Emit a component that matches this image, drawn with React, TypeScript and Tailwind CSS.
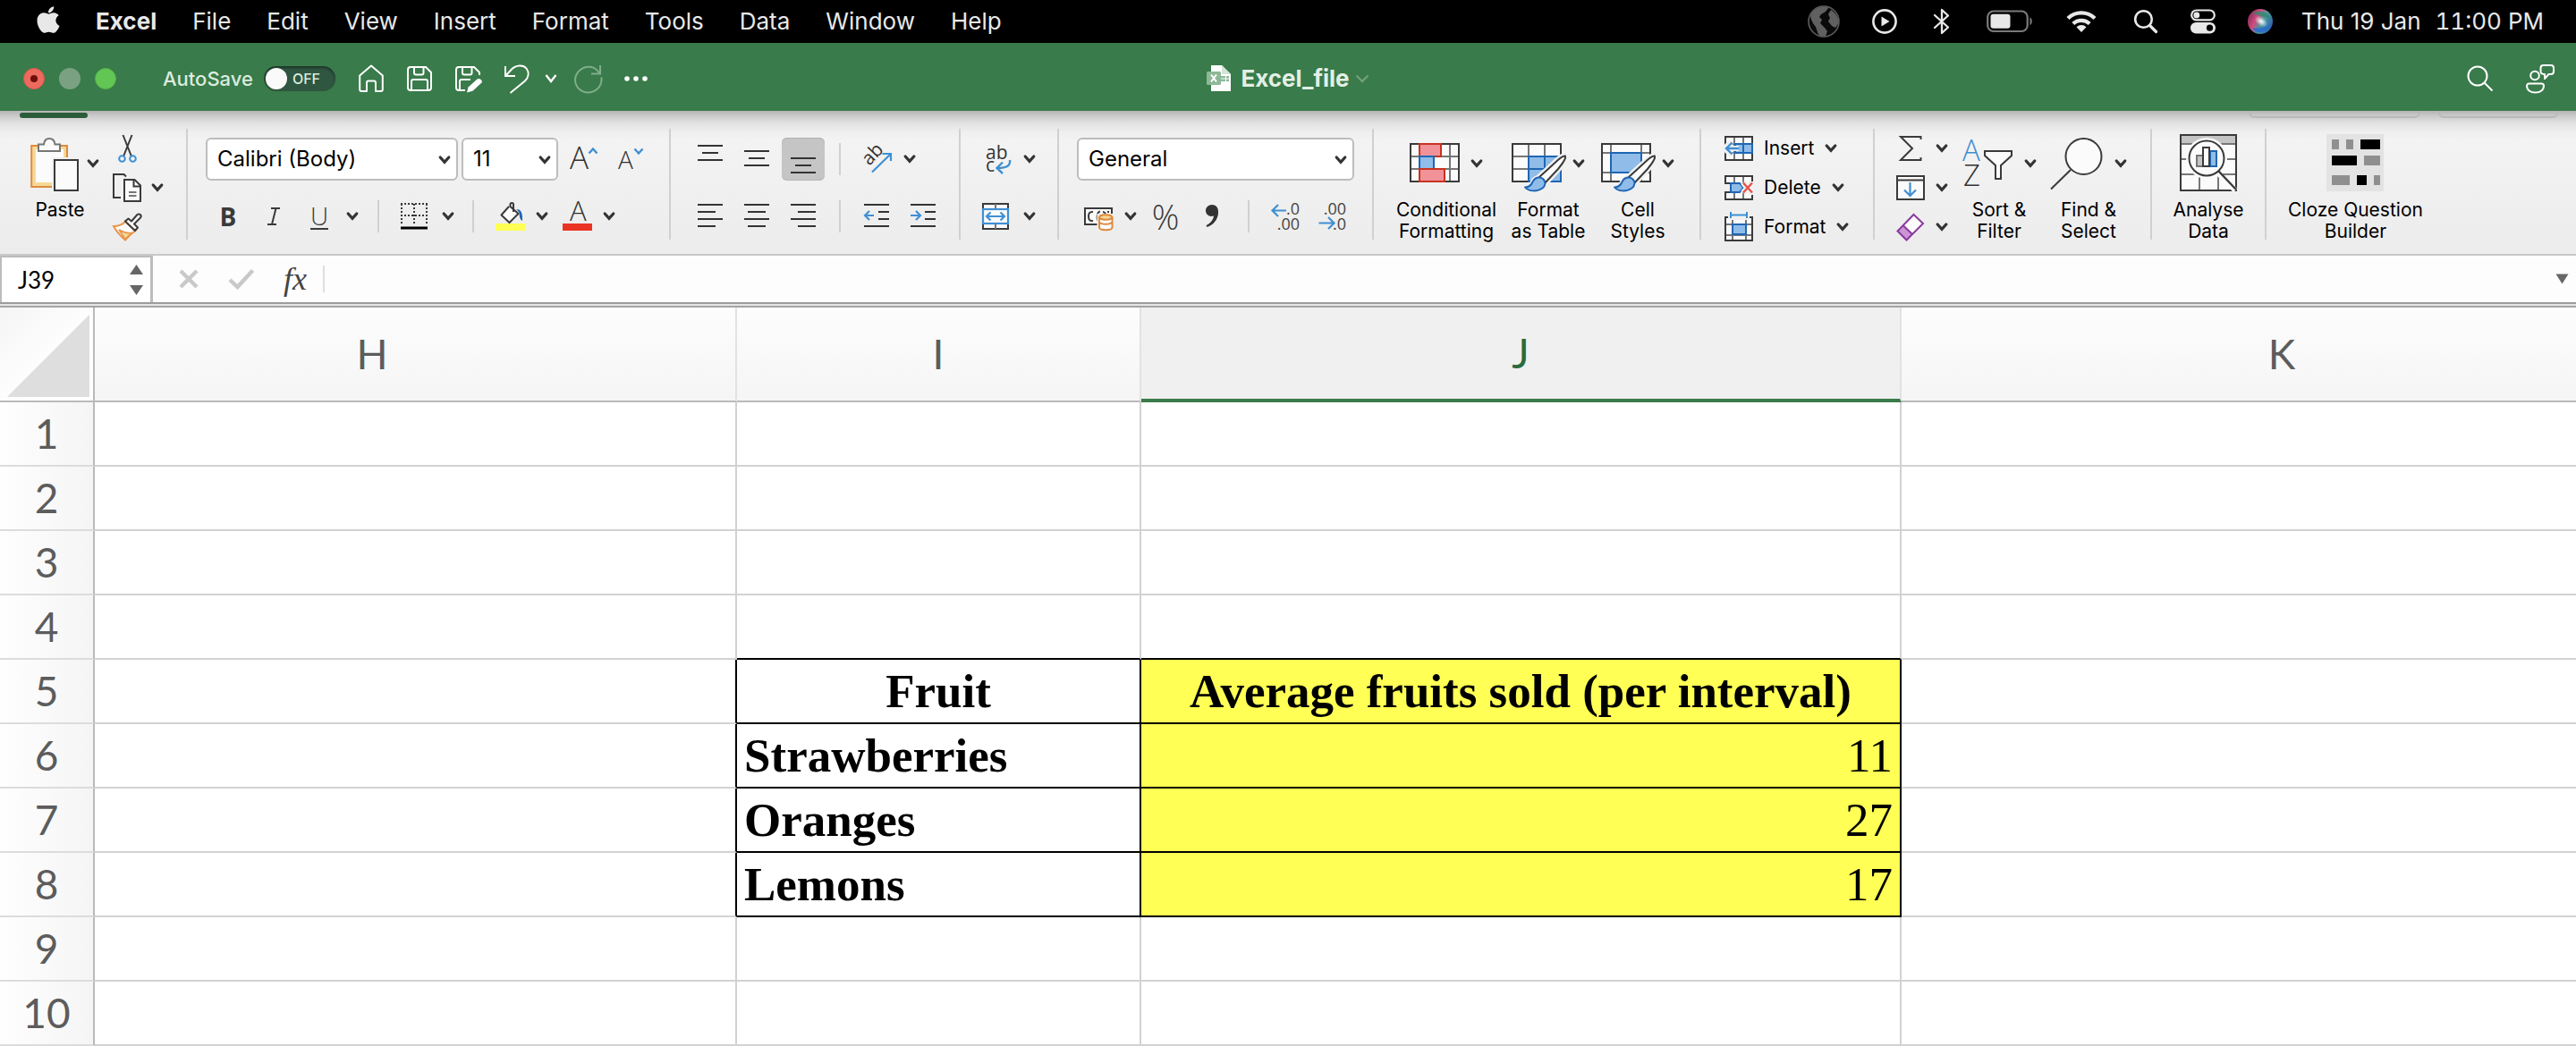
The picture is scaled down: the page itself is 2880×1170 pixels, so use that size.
import React from "react";
import { FaApple } from "react-icons/fa";

const INK = "#3a3a3a";
const BLUE = "#3f8fd2";
const DEEP = "#1f66b5";
const SKY = "#8fbce8";
const PAPER = "#fbfbfb";
const GREY = "#767676";
const RIBBON = "#f1f1f1";

type ArtProps = { w: number; h: number; className?: string; children: React.ReactNode };

function Art({ w, h, className = "", children }: ArtProps) {
  return (
    <svg width={w} height={h} viewBox={`0 0 ${w} ${h}`} fill="none" aria-hidden="true" className={`shrink-0 overflow-visible ${className}`}>
      {children}
    </svg>
  );
}

function Chevron({ className = "" }: { className?: string }) {
  return (
    <Art w={14} h={10} className={className}>
      <path d="M2.2 2 7 7.4 11.8 2" stroke="#333" strokeWidth="3.2" strokeLinecap="round" />
    </Art>
  );
}

type ToolProps = { label: string; className?: string; children: React.ReactNode };

function Tool({ label, className = "", children }: ToolProps) {
  return (
    <button type="button" aria-label={label} title={label} className={`flex shrink-0 items-center ${className}`}>
      {children}
    </button>
  );
}

function Divider({ className = "" }: { className?: string }) {
  return <span className={`h-9 w-[2px] shrink-0 bg-[#d0d0d0] ${className}`} />;
}

function Group({ className = "", children }: { className?: string; children: React.ReactNode }) {
  return <section className={`flex h-[124px] shrink-0 border-r-2 border-[#d0d0d0] ${className}`}>{children}</section>;
}

/* ---------- menu bar ---------- */

const MENUS = ["File", "Edit", "View", "Insert", "Format", "Tools", "Data", "Window", "Help"];

function MenuBar() {
  return (
    <header className="flex h-12 items-center bg-black text-[26px] leading-[48px] whitespace-nowrap text-[#e8e8e8]">
      <nav aria-label="Application menu" className="flex items-center gap-10 pl-9">
        <button type="button" aria-label="Apple menu" className="-mr-1 flex w-[35px] justify-center pb-1">
          <FaApple size={34} />
        </button>
        <button type="button" className="font-bold">Excel</button>
        {MENUS.map((m) => (
          <button type="button" key={m}>{m}</button>
        ))}
      </nav>
      <div className="ml-auto flex items-center pr-9">
        <Art w={36} h={36} className="mr-9">
          <circle cx="18" cy="18" r="17" fill="#0a0a0a" stroke="#5c5c5c" strokeWidth="1.6" />
          <path d="M3 12C5 6 11 1.500 18 1.500C20 1.500 22 2 23.500 2.600L20 7L15 10L13 13L16 16L14 20L19 25L22 29L20 34.800C15 35.500 12 34 11 30L9 24C6 21 4 17 3 12Z" fill="#606060" />
          <path d="M26 5C31 8 35 13 34.500 20L31 25L27 23L23 18L25 14L23 10Z" fill="#606060" />
        </Art>
        <Art w={28} h={28} className="mr-10">
          <circle cx="14" cy="14" r="12.600" stroke="#e8e8e8" strokeWidth="2.600" />
          <path d="M10.500 8.500 19.500 14 10.500 19.500Z" fill="#e8e8e8" />
        </Art>
        <Art w={20} h={30} className="mr-10">
          <path d="M2 8 17 21.500 10 28V2L17 8.500 2 22" stroke="#e8e8e8" strokeWidth="2.300" strokeLinejoin="round" strokeLinecap="round" />
        </Art>
        <Art w={52} h={26} className="mr-9">
          <rect x="1.200" y="1.500" width="44.500" height="22.500" rx="6.500" stroke="#7a7a7a" strokeWidth="2.200" />
          <rect x="4.500" y="4.700" width="22" height="16" rx="3" fill="#e8e8e8" />
          <path d="M48.500 8.500C51.500 9.500 51.500 16 48.500 17Z" fill="#7a7a7a" />
        </Art>
        <Art w={36} h={26} className="mr-10">
          <path d="M3 9.500A21.500 21.500 0 0 1 33 9.500" stroke="#e8e8e8" strokeWidth="4.400" />
          <path d="M8.800 15.500A13.300 13.300 0 0 1 27.200 15.500" stroke="#e8e8e8" strokeWidth="4.200" />
          <path d="M12.500 19.300A8 8 0 0 1 23.500 19.300L18 25Z" fill="#e8e8e8" />
        </Art>
        <Art w={28} h={28} className="mr-9">
          <circle cx="11.500" cy="11.500" r="9.300" stroke="#e8e8e8" strokeWidth="2.600" />
          <path d="M18.500 18.500 25.500 25.500" stroke="#e8e8e8" strokeWidth="3.200" strokeLinecap="round" />
        </Art>
        <Art w={28} h={28} className="mr-9">
          <rect x="1.200" y="1.500" width="25.600" height="10.800" rx="5.400" stroke="#e8e8e8" strokeWidth="2.200" />
          <circle cx="6.800" cy="6.900" r="3.400" fill="#e8e8e8" />
          <rect x="0" y="15" width="28" height="12.500" rx="6.200" fill="#e8e8e8" />
          <circle cx="21.500" cy="21.200" r="3.600" fill="#000" />
        </Art>
        <Art w={28} h={28} className="mr-8">
          <defs>
            <linearGradient id="orb" x1="0" y1="0.200" x2="1" y2="0.700">
              <stop offset="0" stopColor="#7c2d5b" />
              <stop offset="0.350" stopColor="#d14b7c" />
              <stop offset="0.600" stopColor="#4a9a9f" />
              <stop offset="1" stopColor="#2b5fb4" />
            </linearGradient>
            <radialGradient id="orbGlow">
              <stop offset="0" stopColor="#fff" />
              <stop offset="1" stopColor="#fff" stopOpacity="0" />
            </radialGradient>
          </defs>
          <circle cx="14" cy="14" r="14" fill="url(#orb)" />
          <path d="M6 5C13 0 24 4 26 12C20 8 12 8 6 5Z" fill="#2f8a6a" opacity="0.800" />
          <path d="M5 22C10 21 18 22 25 18C21 27 10 29 5 22Z" fill="#2a6bd0" opacity="0.850" />
          <ellipse cx="15" cy="14" rx="8" ry="5" fill="url(#orbGlow)" transform="rotate(35 15 14)" />
        </Art>
        <span className="mr-4">Thu 19 Jan</span>
        <span className="tabular-nums">11:00 PM</span>
      </div>
    </header>
  );
}

/* ---------- title bar ---------- */

function TitleBar() {
  return (
    <div className="grid h-[76px] grid-cols-[1fr_auto_1fr] items-center bg-[#397b4a] pt-1 text-white">
      <div className="flex items-center pl-[26px]">
        <div className="flex gap-4">
          <button type="button" aria-label="Close window" className="flex size-6 items-center justify-center rounded-full border border-[#d9564b] bg-[#ed6a5f]">
            <span className="size-2 rounded-full bg-[#6e0f0a]" />
          </button>
          <button type="button" aria-label="Minimise window" className="size-6 rounded-full bg-[#7ba183]" />
          <button type="button" aria-label="Zoom window" className="size-6 rounded-full border border-[#54b045] bg-[#62c655]" />
        </div>
        <label className="ml-[52px] flex items-center gap-3 text-[22px] leading-7 font-medium text-[#dcebdf]">
          AutoSave
          <span className="relative flex h-7 w-20 items-center rounded-full bg-[#2f5640] shadow-[inset_0_2px_3px_rgba(0,0,0,0.4)]">
            <input type="checkbox" role="switch" className="absolute inset-0 size-full cursor-pointer appearance-none" />
            <span className="ml-[2px] size-6 rounded-full bg-[#fafafa]" />
            <span className="ml-[6px] text-[16px] leading-5 font-medium">OFF</span>
          </span>
        </label>
        <Tool label="Home" className="ml-[26px]">
          <Art w={28} h={32}>
            <path d="M1.200 12.500 14 1.600 26.800 12.500V28a2 2 0 0 1-2 2H19V20.500a2 2 0 0 0-2-2H11a2 2 0 0 0-2 2V30H3.200a2 2 0 0 1-2-2Z" stroke="#fff" strokeWidth="2" strokeLinejoin="round" />
          </Art>
        </Tool>
        <Tool label="Save" className="ml-[26px]">
          <Art w={28} h={30}>
            <path d="M4 2H21L27 8V25a3 3 0 0 1-3 3H4a3 3 0 0 1-3-3V5a3 3 0 0 1 3-3Z" stroke="#fff" strokeWidth="2" />
            <path d="M8 2V8.500a2 2 0 0 0 2 2H16.500a2 2 0 0 0 2-2V2M5 28V18a2 2 0 0 1 2-2H21a2 2 0 0 1 2 2V28" stroke="#fff" strokeWidth="2" />
          </Art>
        </Tool>
        <Tool label="Save as" className="ml-[26px]">
          <Art w={32} h={32}>
            <path d="M11 29H4a3 3 0 0 1-3-3V6a3 3 0 0 1 3-3H21L27 9V12" stroke="#fff" strokeWidth="2" />
            <path d="M8 3V9.500a2 2 0 0 0 2 2H16.500a2 2 0 0 0 2-2V3M5 29V19a2 2 0 0 1 2-2H17" stroke="#fff" strokeWidth="2" />
            <path d="M24.500 16.500C27 14.500 31 18 29.500 20.500L19.500 29.800 13 31.500 14.500 25.500Z" fill="#fff" />
          </Art>
        </Tool>
        <Tool label="Undo" className="ml-[22px] gap-4">
          <Art w={30} h={34}>
            <path d="M2 3V14H13M2.500 13.500 9 6.500C14 1.500 22 1 25.500 5.500C29 10 28 15.500 24 19.500L7.500 33" stroke="#fff" strokeWidth="2" />
          </Art>
          <Art w={14} h={12}>
            <path d="M1.500 2 7 9 12.500 2" stroke="#fff" strokeWidth="2.400" />
          </Art>
        </Tool>
        <Tool label="Redo" className="ml-[18px]">
          <Art w={34} h={34}>
            <path d="M30 2V11.500H20M29 11C26 5 20 3 14.500 4C7 5.500 2 12 2 18.500C2 26 8.500 32.500 16.500 32.500S31.500 26 31.500 18.500V15.500" stroke="#7fae8a" strokeWidth="2" />
          </Art>
        </Tool>
        <Tool label="More commands" className="ml-[22px]">
          <Art w={28} h={8}>
            <circle cx="4" cy="4" r="2.800" fill="#fff" />
            <circle cx="14" cy="4" r="2.800" fill="#fff" />
            <circle cx="24" cy="4" r="2.800" fill="#fff" />
          </Art>
        </Tool>
      </div>
      <button type="button" className="flex items-center text-[26px] leading-8 font-bold text-[#e3efe5]">
        <Art w={28} h={30} className="mr-[10px]">
          <path d="M5 0H17L27 10V29H5Z" fill="#fff" />
          <path d="M17 0V10H27Z" fill="#d5e4d8" />
          <path d="M16 12h5v2.500h-5zM22 12h3v2.500h-3zM16 15.500h5V18h-5zM22 15.500h3V18h-3z" fill="#8db897" />
          <rect x="0" y="7" width="16" height="15" rx="1.500" fill="#8db897" />
          <path d="M5 10.500 11 18.500M11 10.500 5 18.500" stroke="#fff" strokeWidth="2" />
        </Art>
        Excel_file
        <Art w={16} h={10} className="ml-[6px]">
          <path d="M1.500 1.500 8 8 14.500 1.500" stroke="#6fa07b" strokeWidth="2.400" />
        </Art>
      </button>
      <div className="flex items-center justify-end pr-6">
        <Tool label="Search" className="mr-9">
          <Art w={30} h={30}>
            <circle cx="12" cy="12" r="10.500" stroke="#fff" strokeWidth="2" />
            <path d="M19.500 19.500 28.500 28.500" stroke="#fff" strokeWidth="2" />
          </Art>
        </Tool>
        <Tool label="Share">
          <Art w={32} h={34}>
            <circle cx="10" cy="13.500" r="4.800" stroke="#fff" strokeWidth="2" />
            <path d="M3.500 22.500H17.500a2.500 2.500 0 0 1 2.500 2.500C20 29.500 16 32.500 10.500 32.500S1 29.500 1 25a2.500 2.500 0 0 1 2.500-2.500Z" stroke="#fff" strokeWidth="2" />
            <path d="M19.500 2H28a3 3 0 0 1 3 3V9a3 3 0 0 1-3 3H25.500L21 17V12C18.500 12 16.500 11 16.500 9V5a3 3 0 0 1 3-3Z" stroke="#fff" strokeWidth="2" strokeLinejoin="round" />
          </Art>
        </Tool>
      </div>
    </div>
  );
}

/* ---------- ribbon ---------- */

function PickBox({ label, value, className }: { label: string; value: string; className: string }) {
  return (
    <span className={`relative flex h-12 shrink-0 ${className}`}>
      <select aria-label={label} defaultValue={value} className="size-full appearance-none rounded-md border-2 border-[#bdbdbd] bg-white pr-9 pl-[11px] text-[24px] leading-7 text-black">
        <option>{value}</option>
      </select>
      <Chevron className="pointer-events-none absolute top-[20px] right-2" />
    </span>
  );
}

function Lines({ w, rows, className = "" }: { w: number; rows: [number, number, number][]; className?: string }) {
  return (
    <Art w={w} h={32} className={className}>
      {rows.map(([x1, x2, y]) => (
        <path key={`${x1}-${y}`} d={`M${x1} ${y}H${x2}`} stroke="#333" strokeWidth="2" />
      ))}
    </Art>
  );
}

function BigTool({ icon, lines, chevron = true, className = "" }: { icon: React.ReactNode; lines: string[]; chevron?: boolean; className?: string }) {
  return (
    <button type="button" className={`flex shrink-0 flex-col items-center pt-[6px] text-[21px] leading-6 whitespace-nowrap text-black ${className}`}>
      <span className="mb-[9px] flex h-16 items-start">
        {icon}
        {chevron && <Chevron className="mt-7 ml-3" />}
      </span>
      {lines.map((l) => (
        <span key={l}>{l}</span>
      ))}
    </button>
  );
}

function Brush() {
  const handle = "M60 14.500C58 14 53 17.500 48 22.500L30.500 38.500 37 45 52 29C57 23 61 17 60 14.500Z";
  const tip = "M15 49.500C19 49.500 22 47 23.500 43.500C25.500 38.500 31.500 37 35 40C38.500 43 38 48 34.500 50.500C29 54.500 19 54.500 15 49.500Z";
  return (
    <>
      <path d={handle} stroke={RIBBON} strokeWidth="7" />
      <path d={tip} stroke={RIBBON} strokeWidth="5" />
      <path d={handle} fill={PAPER} stroke={INK} strokeWidth="2" strokeLinejoin="round" />
      <path d={tip} fill={SKY} stroke={DEEP} strokeWidth="2" strokeLinejoin="round" />
    </>
  );
}

function ClipboardGroup() {
  return (
    <Group className="w-[210px] pl-[34px]">
      <BigTool
        className="w-[66px] [&>span:first-child]:self-start"
        lines={["Paste"]}
        icon={
          <Art w={55} h={64} className="mt-1 -mr-1">
            <path d="M1.200 9H41V55H1.200Z" fill="#f5d998" stroke="#e08a3c" strokeWidth="2" />
            <rect x="6" y="13" width="31" height="37" fill={PAPER} />
            <path d="M9 7.500H15C15.500 3 18 1 21 1S27 3 27.500 7.500H33V15H9Z" fill={PAPER} stroke={GREY} strokeWidth="2" />
            <rect x="24" y="22" width="30" height="40" fill={RIBBON} />
            <rect x="27" y="25" width="26" height="34" fill={PAPER} stroke={INK} strokeWidth="2" />
          </Art>
        }
      />
      <div className="ml-[26px] flex flex-col">
        <Tool label="Cut" className="h-11 pl-[6px]">
          <Art w={22} h={34}>
            <path d="M5.500 2 15 26M15.500 2 6 26" stroke={INK} strokeWidth="2" />
            <circle cx="4.500" cy="28.500" r="3.300" stroke={BLUE} strokeWidth="2" />
            <circle cx="16.500" cy="28.500" r="3.300" stroke={BLUE} strokeWidth="2" />
          </Art>
        </Tool>
        <Tool label="Copy" className="h-11 gap-[10px]">
          <Art w={33} h={34}>
            <path d="M9 28H1V2H12.500L15 4.500" stroke={INK} strokeWidth="2" />
            <path d="M13 8H24.500L31 14.500V32H13Z" fill={PAPER} stroke={INK} strokeWidth="2" />
            <path d="M23.500 8.500V15.500H31" stroke={INK} strokeWidth="2" />
            <path d="M18 22H26.500M18 26H26.500" stroke={GREY} strokeWidth="2" />
          </Art>
          <Chevron />
        </Tool>
        <Tool label="Format painter" className="h-11">
          <Art w={33} h={32}>
            <path d="M1 15C6 15 12 13 14 9.500L25 20.500C21 23 17 27 14 30.500C9 26 4 21 1 15Z" fill={PAPER} stroke="#e8954a" strokeWidth="2" />
            <path d="M7 19C12 22 17 23 21 22.500L14 29.500Z" fill="#f5d998" stroke="#e8954a" strokeWidth="1.500" />
            <path d="M14 9.500 17.500 6.500 21 9.500 27.500 2C30 0.500 33 3 31 5.500L24 12.500 28 16.500 25 20Z" fill={PAPER} stroke={INK} strokeWidth="2" strokeLinejoin="round" />
          </Art>
        </Tool>
      </div>
    </Group>
  );
}

function FontGroup() {
  return (
    <Group className="w-[540px] flex-col gap-4 pt-[10px] pl-5">
      <div className="flex h-12 items-center">
        <PickBox label="Font" value="Calibri (Body)" className="w-[282px]" />
        <PickBox label="Font size" value="11" className="ml-1 w-[108px]" />
        <Tool label="Increase font size" className="ml-3">
          <Art w={34} h={32}>
            <text x="1" y="27" fontFamily="'Open Sans'" fontWeight="300" fontSize="35" fill="#333">A</text>
            <path d="M22.500 9.500 27 4.500 31.500 9.500" stroke={BLUE} strokeWidth="2.400" />
          </Art>
        </Tool>
        <Tool label="Decrease font size" className="ml-5">
          <Art w={34} h={32}>
            <text x="1" y="27" fontFamily="'Open Sans'" fontWeight="300" fontSize="28" fill="#333">A</text>
            <path d="M19.500 4.500 24 9.500 28.500 4.500" stroke={BLUE} strokeWidth="2.400" />
          </Art>
        </Tool>
      </div>
      <div className="flex h-12 items-center text-[28px] leading-8 text-[#3a3a3a]">
        <Tool label="Bold" className="w-[50px] justify-center font-['Open_Sans'] font-bold">B</Tool>
        <Tool label="Italic" className="w-[52px] justify-center">
          <Art w={16} h={24}>
            <path d="M5 3H15M1 21H11M10.500 3 6 21" stroke={INK} strokeWidth="2" />
          </Art>
        </Tool>
        <Tool label="Underline" className="w-[50px] justify-center">
          <span className="border-b-2 border-[#3a3a3a] font-['Open_Sans'] leading-7 font-light">U</span>
        </Tool>
        <Tool label="Underline styles" className="w-6 justify-center"><Chevron /></Tool>
        <Divider className="mr-6 ml-4" />
        <Tool label="Borders" className="gap-4">
          <Art w={30} h={32}>
            <path d="M1 2V26M29 2V26M15 2V26M0 2H30M0 15H30" stroke={INK} strokeWidth="2" strokeDasharray="2 2" />
            <path d="M0 29H30" stroke="#000" strokeWidth="3" />
          </Art>
          <Chevron />
        </Tool>
        <Divider className="mr-6 ml-5" />
        <Tool label="Fill colour" className="gap-3">
          <Art w={33} h={34}>
            <path d="M15 6 6.500 15.500 15.500 24 25.500 14 16.500 6V3.500C16.500 1.500 20 1.500 20 3.500V12" fill={PAPER} stroke={INK} strokeWidth="2" strokeLinejoin="round" />
            <path d="M23.500 9C28.500 9 30.500 13 30 22C27.500 21 26.500 17 26.500 13Z" fill={DEEP} />
            <rect x="0" y="25" width="33" height="8" fill="#ffff54" />
          </Art>
          <Chevron />
        </Tool>
        <Tool label="Font colour" className="ml-4 gap-3">
          <Art w={33} h={34}>
            <text x="8" y="22" fontFamily="'Open Sans'" fontWeight="300" fontSize="31" fill="#333">A</text>
            <rect x="0" y="25" width="33" height="8" fill="#ea3323" />
          </Art>
          <Chevron />
        </Tool>
      </div>
    </Group>
  );
}

function AlignGroup() {
  return (
    <Group className="w-[324px] flex-col gap-4 pt-[10px] pl-[18px]">
      <div className="flex h-12 items-center">
        <Tool label="Top align" className="h-12 w-[52px] justify-center"><Lines w={28} rows={[[0, 28, 1], [5, 23, 9], [0, 28, 17]]} /></Tool>
        <Tool label="Middle align" className="h-12 w-[52px] justify-center"><Lines w={28} rows={[[0, 28, 7], [5, 23, 15], [0, 28, 23]]} /></Tool>
        <Tool label="Bottom align" className="ml-[2px] h-12 w-12 justify-center rounded-md bg-[#c5c5c5] shadow-[inset_0_1px_0_#adadad,inset_0_-1px_0_#b5b5b5]"><Lines w={28} rows={[[0, 28, 15], [5, 23, 23], [0, 28, 31]]} /></Tool>
        <Divider className="mr-6 ml-4" />
        <Tool label="Orientation" className="gap-3">
          <Art w={34} h={34}>
            <text x="0" y="0" fontFamily="'Open Sans'" fontSize="21" fill="#333" transform="translate(8 25) rotate(-47)">ab</text>
            <path d="M11 31.500 32 11M22.500 11H32V19" stroke={BLUE} strokeWidth="2.200" />
          </Art>
          <Chevron />
        </Tool>
      </div>
      <div className="flex h-12 items-center">
        <Tool label="Align left" className="h-12 w-[52px] justify-center"><Lines w={28} rows={[[0, 28, 3], [0, 20, 11], [0, 28, 19], [0, 20, 27]]} /></Tool>
        <Tool label="Centre" className="h-12 w-[52px] justify-center"><Lines w={28} rows={[[0, 28, 3], [4, 24, 11], [0, 28, 19], [4, 24, 27]]} /></Tool>
        <Tool label="Align right" className="h-12 w-[52px] justify-center"><Lines w={28} rows={[[0, 28, 3], [8, 28, 11], [0, 28, 19], [8, 28, 27]]} /></Tool>
        <Divider className="mr-6 ml-[14px]" />
        <Tool label="Decrease indent">
          <Art w={32} h={32}>
            <path d="M2 3H30M18 11H30M18 19H30M2 27H30" stroke="#333" strokeWidth="2" />
            <path d="M3 15H13M8 10 3 15 8 20" stroke={BLUE} strokeWidth="2.200" />
          </Art>
        </Tool>
        <Tool label="Increase indent" className="ml-5">
          <Art w={32} h={32}>
            <path d="M2 3H30M18 11H30M18 19H30M2 27H30" stroke="#333" strokeWidth="2" />
            <path d="M2 15H12M8 10 13 15 8 20" stroke={BLUE} strokeWidth="2.200" />
          </Art>
        </Tool>
      </div>
    </Group>
  );
}

function WrapGroup() {
  return (
    <Group className="w-[110px] flex-col gap-4 pt-[10px] pl-6">
      <div className="flex h-12 items-center">
        <Tool label="Wrap text" className="gap-[14px]">
          <Art w={32} h={36}>
            <text x="4" y="18" fontFamily="'Open Sans'" fontSize="21" fill="#333">ab</text>
            <text x="4" y="32" fontFamily="'Open Sans'" fontSize="21" fill="#333">c</text>
            <path d="M31 19C32 25 28 28 17 28M23 21.500 16.500 28 23 34" stroke={BLUE} strokeWidth="2.400" />
          </Art>
          <Chevron />
        </Tool>
      </div>
      <div className="flex h-12 items-center">
        <Tool label="Merge and centre" className="gap-4">
          <Art w={30} h={32}>
            <rect x="1" y="2" width="28" height="28" fill={PAPER} stroke={INK} strokeWidth="2" />
            <path d="M15 2V8M15 24V30" stroke={GREY} strokeWidth="2" />
            <rect x="1" y="8" width="28" height="16" fill={PAPER} stroke={BLUE} strokeWidth="2.200" />
            <path d="M5 16H25M9.500 11.500 5 16 9.500 20.500M20.500 11.500 25 16 20.500 20.500" stroke={BLUE} strokeWidth="2.200" />
          </Art>
          <Chevron />
        </Tool>
      </div>
    </Group>
  );
}

function NumberGroup() {
  return (
    <Group className="w-[352px] flex-col gap-4 pt-[10px] pl-5">
      <div className="flex h-12 items-center">
        <PickBox label="Number format" value="General" className="w-[310px]" />
      </div>
      <div className="flex h-12 items-center pl-2">
        <Tool label="Accounting format" className="gap-3">
          <Art w={33} h={32}>
            <rect x="1" y="7" width="30" height="18" fill={PAPER} stroke={INK} strokeWidth="2" />
            <path d="M10 11C6 10.500 5 13 5 16S6 21.500 10 21M18 10.500C14 11 14 20 16 21.500M21 11C23 11 24 13 24 14M26 11H28" stroke={INK} strokeWidth="2" />
            <rect x="14.500" y="13" width="18.500" height="19" fill={RIBBON} />
            <path d="M17 17V28.500C17 32 31.500 32 31.500 28.500V17" fill={PAPER} stroke="#e08a3c" strokeWidth="2" />
            <ellipse cx="24.200" cy="17" rx="7.200" ry="2.800" fill="#f5d998" stroke="#e08a3c" strokeWidth="2" />
            <path d="M17 22.500C19 25.500 29.500 25.500 31.500 22.500" stroke="#e08a3c" strokeWidth="2" />
          </Art>
          <Chevron />
        </Tool>
        <Tool label="Percent style" className="ml-4 w-8 justify-center font-['Open_Sans'] text-[38px] leading-[48px] font-light text-[#3a3a3a]">%</Tool>
        <Tool label="Comma style" className="ml-7">
          <Art w={16} h={28}>
            <path d="M8 1C13 1 15.500 5 15 10.500C14.500 18 9 24 2.500 26L1.500 24C6 22 9.500 18 10 13.500C5 15 1 12 1 7.500C1 4 4 1 8 1Z" fill="#333" />
          </Art>
        </Tool>
        <Divider className="mr-6 ml-8" />
        <Tool label="Increase decimals">
          <Art w={32} h={34}>
            <text x="32" y="15" textAnchor="end" fontFamily="'Open Sans'" fontSize="18" fill="#444">.0</text>
            <text x="32" y="32" textAnchor="end" fontFamily="'Open Sans'" fontSize="18" fill="#444">.00</text>
            <path d="M1.500 10.500H17M8 4 1.500 10.500 8 17" stroke={BLUE} strokeWidth="2.200" />
          </Art>
        </Tool>
        <Tool label="Decrease decimals" className="ml-5">
          <Art w={32} h={34}>
            <text x="32" y="15" textAnchor="end" fontFamily="'Open Sans'" fontSize="18" fill="#444">.00</text>
            <text x="32" y="32" textAnchor="end" fontFamily="'Open Sans'" fontSize="18" fill="#444">.0</text>
            <path d="M1.500 24.500H18M12 18 18.500 24.500 12 31" stroke={BLUE} strokeWidth="2.200" />
          </Art>
        </Tool>
      </div>
    </Group>
  );
}

function StylesGroup() {
  return (
    <Group className="w-[366px] pl-5">
      <BigTool
        className="w-[122px]"
        lines={["Conditional", "Formatting"]}
        icon={
          <Art w={56} h={54} className="mt-[10px]">
            <rect x="1" y="1" width="54" height="42" fill={PAPER} />
            <path d="M0 15H56M0 29H56M11 1V43M27 1V43M45 1V43" stroke={GREY} strokeWidth="2" />
            <rect x="1" y="1" width="54" height="42" stroke={INK} strokeWidth="2" />
            <rect x="28" y="16" width="16" height="12" fill={PAPER} />
            <rect x="11" y="1" width="24" height="14" fill="#f19299" stroke="#c9321f" strokeWidth="2" />
            <rect x="11" y="15" width="16" height="14" fill={SKY} stroke={DEEP} strokeWidth="2" />
            <rect x="11" y="29" width="28" height="14" fill="#f19299" stroke="#c9321f" strokeWidth="2" />
          </Art>
        }
      />
      <BigTool
        className="ml-2 w-[90px]"
        lines={["Format", "as Table"]}
        icon={
          <Art w={62} h={56} className="mt-[10px] -mr-[6px]">
            <rect x="1" y="1" width="54" height="42" fill={PAPER} />
            <path d="M0 15H56M0 29H56M19 1V43M37 1V43" stroke={GREY} strokeWidth="2" />
            <rect x="1" y="1" width="54" height="42" stroke={INK} strokeWidth="2" />
            <path d="M19 15H55V43H19ZM37 15V43M19 29H55" fill={SKY} stroke={DEEP} strokeWidth="2" />
            <Brush />
          </Art>
        }
      />
      <BigTool
        className="ml-3 w-[86px]"
        lines={["Cell", "Styles"]}
        icon={
          <Art w={62} h={56} className="mt-[10px] -mr-[6px]">
            <rect x="1" y="1" width="54" height="42" fill={PAPER} />
            <path d="M0 11H56M0 33H56M11 1V43M45 1V43" stroke={GREY} strokeWidth="2" />
            <rect x="1" y="1" width="54" height="42" stroke={INK} strokeWidth="2" />
            <rect x="11" y="11" width="34" height="22" fill={SKY} stroke={DEEP} strokeWidth="2" />
            <Brush />
          </Art>
        }
      />
    </Group>
  );
}

function CellsGroup() {
  return (
    <Group className="w-[194px] flex-col pl-[26px] text-[21px] leading-6 text-black">
      <button type="button" className="flex h-11 shrink-0 items-center">
        <Art w={32} h={30} className="mr-3">
          <rect x="1" y="2" width="30" height="26" fill={PAPER} />
          <path d="M11 2V28M21 2V28M0 10H32M0 20H32" stroke={GREY} strokeWidth="2" />
          <rect x="1" y="2" width="30" height="26" stroke={INK} strokeWidth="2" />
          <rect x="12" y="10" width="19" height="10" fill={SKY} stroke={DEEP} strokeWidth="2" />
          <path d="M21 10V20" stroke={DEEP} strokeWidth="2" />
          <path d="M8 7 0 15 8 23M1 15H16" stroke={RIBBON} strokeWidth="6" />
          <path d="M8.500 8.500 2 15 8.500 21.500M2 15H16" stroke={BLUE} strokeWidth="2.400" />
        </Art>
        Insert
        <Chevron className="ml-3" />
      </button>
      <button type="button" className="flex h-11 shrink-0 items-center">
        <Art w={32} h={30} className="mr-3">
          <path d="M1 2H31V28H1V20H8V10H1Z" fill={PAPER} />
          <path d="M11 2V28M21 2V28" stroke={GREY} strokeWidth="2" />
          <path d="M31 8V2H1V10H10M10 20H1V28H31V23" stroke={INK} strokeWidth="2" />
          <path d="M7 10H17L21 15 17 20H7Z" fill={SKY} stroke={DEEP} strokeWidth="2" />
          <path d="M21 9 31 21M31 9 21 21" stroke={RIBBON} strokeWidth="7" />
          <path d="M21 9.500 31 20.500M31 9.500 21 20.500" stroke="#e5534b" strokeWidth="2.400" />
        </Art>
        Delete
        <Chevron className="ml-3" />
      </button>
      <button type="button" className="flex h-11 shrink-0 items-center">
        <Art w={32} h={34} className="mr-3">
          <rect x="1" y="7" width="30" height="26" fill={PAPER} />
          <path d="M9 7V33M24 7V33M0 14H32M0 26H32" stroke={GREY} strokeWidth="2" />
          <rect x="1" y="6" width="30" height="26" stroke={INK} strokeWidth="2" />
          <rect x="4" y="0" width="24" height="9" fill={RIBBON} />
          <rect x="9" y="14" width="15" height="11" fill={SKY} stroke={DEEP} strokeWidth="2" />
          <path d="M7 0V7M25 0V7M7 3.500H25" stroke={BLUE} strokeWidth="2" />
        </Art>
        Format
        <Chevron className="ml-3" />
      </button>
    </Group>
  );
}

function EditingGroup() {
  return (
    <Group className="w-[310px] pl-6">
      <div className="flex flex-col">
        <Tool label="AutoSum" className="h-11 gap-3">
          <Art w={32} h={30}>
            <path d="M27.500 5V2H5L18 15 5 28H27.500V25" stroke={INK} strokeWidth="2" />
          </Art>
          <Chevron />
        </Tool>
        <Tool label="Fill" className="h-11 gap-3">
          <Art w={32} h={30}>
            <rect x="1" y="2" width="30" height="26" fill={PAPER} stroke={INK} strokeWidth="2" />
            <path d="M1 6.500H31" stroke={INK} strokeWidth="2" />
            <path d="M15.500 9V23.500M9 17.500 15.500 24 22 17.500" stroke={BLUE} strokeWidth="2.200" />
          </Art>
          <Chevron />
        </Tool>
        <Tool label="Clear" className="h-11 gap-3">
          <Art w={32} h={32}>
            <path d="M19.500 2 30 12 11.500 30.500 1.500 20.500Z" fill={PAPER} />
            <path d="M7.500 14 18 24 11.500 30.500 1.500 20.500Z" fill="#cb95d6" />
            <path d="M19.500 2 30 12 11.500 30.500 1.500 20.500ZM7.500 14 18 24" stroke="#8b3a9e" strokeWidth="2" />
          </Art>
          <Chevron />
        </Tool>
      </div>
      <BigTool
        className="ml-[14px] w-[86px]"
        lines={["Sort &", "Filter"]}
        icon={
          <Art w={57} h={62} className="mt-1">
            <text x="0" y="26" fontFamily="'Open Sans'" fontWeight="300" fontSize="33" fill={BLUE}>A</text>
            <text x="1" y="54" fontFamily="'Open Sans'" fontWeight="300" fontSize="33" fill="#333">Z</text>
            <path d="M25 15H55V20L43 31V46H37V31L25 20Z" fill={PAPER} stroke={INK} strokeWidth="2" />
          </Art>
        }
      />
      <BigTool
        className="ml-[14px] w-[86px]"
        lines={["Find &", "Select"]}
        icon={
          <Art w={60} h={62} className="mt-1">
            <circle cx="37.500" cy="21" r="20" fill={PAPER} stroke={INK} strokeWidth="2" />
            <path d="M23 36 1 57.500" stroke={INK} strokeWidth="2" />
          </Art>
        }
      />
    </Group>
  );
}

function Ribbon() {
  return (
    <div className="relative flex h-[162px] overflow-hidden border-b-2 border-[#c8c8c8] bg-[linear-gradient(180deg,#b4b4b4_0px,#cccccc_6px,#e2e2e2_14px,#efefef_24px,#f3f3f3_34px,#ececec_160px)] pt-5">
      <span className="absolute top-[2px] left-[22px] h-[6px] w-[76px] rounded-[3px] bg-[#2b5c3a]" />
      <span className="absolute -top-4 right-[174px] h-6 w-[192px] rounded-md border-2 border-[#b9b9b9]" />
      <span className="absolute -top-4 right-[20px] h-6 w-[134px] rounded-md border-2 border-[#b9b9b9]" />
      <ClipboardGroup />
      <FontGroup />
      <AlignGroup />
      <WrapGroup />
      <NumberGroup />
      <StylesGroup />
      <CellsGroup />
      <EditingGroup />
      <Group className="w-[128px] justify-center">
        <BigTool
          chevron={false}
          lines={["Analyse", "Data"]}
          icon={
            <Art w={64} h={64}>
              <rect x="1" y="1" width="62" height="62" fill={PAPER} />
              <rect x="1" y="1" width="62" height="9" fill="#c4c4c4" />
              <path d="M1 11H63M1 28H63M1 45H63M22 45V63M43 45V63" stroke={GREY} strokeWidth="2" />
              <rect x="1" y="1" width="62" height="62" stroke={INK} strokeWidth="2" />
              <circle cx="30" cy="27" r="23" fill={PAPER} />
              <path d="M42 43 62 63" stroke={PAPER} strokeWidth="6" />
              <circle cx="30" cy="27" r="19.500" fill={PAPER} stroke={INK} strokeWidth="2" />
              <path d="M43.500 41.500 63 62" stroke={INK} strokeWidth="2.400" />
              <rect x="19" y="24" width="7" height="12" fill="#c4c4c4" stroke={GREY} strokeWidth="2" />
              <rect x="34" y="19" width="7" height="17" fill={SKY} stroke={DEEP} strokeWidth="2" />
              <rect x="26" y="15" width="7" height="21" fill={PAPER} stroke={INK} strokeWidth="2" />
            </Art>
          }
        />
      </Group>
      <BigTool
        className="h-[124px] px-6"
        chevron={false}
        lines={["Cloze Question", "Builder"]}
        icon={
          <Art w={64} h={64}>
            <rect width="64" height="64" fill="#e3e3e3" />
            <path d="M6 6h8v11H6zM22 6h8v11h-8zM42 24h18v11H42zM6 46h20v11H6zM53 46h7v11h-7z" fill="#8f8f8f" />
            <path d="M38 6h22v11H38zM6 24h28v11H6zM34 46h11v11H34z" fill="#000" />
          </Art>
        }
      />
    </div>
  );
}

/* ---------- formula bar ---------- */

function FormulaBar() {
  return (
    <div className="flex h-[58px] items-start border-b-2 border-[#a5a5a5] bg-[#e4e4e4]">
      <div className="flex h-[54px] w-full items-center border-b-2 border-[#9c9c9c] bg-[#fdfdfd]">
        <div className="flex h-[52px] w-[171px] shrink-0 items-center border-t-2 border-r-[3px] border-l-2 border-[#bcbcbc] bg-white">
          <input aria-label="Name box" defaultValue="J39" className="w-[130px] shrink-0 bg-transparent pl-[18px] font-['Lato','Open_Sans',sans-serif] text-[26px] leading-8 text-black outline-none" />
          <Art w={30} h={36} className="ml-2">
            <path d="M5 12 12.500 1 20 12ZM5 24H20L12.500 35Z" fill="#666" />
          </Art>
        </div>
        <Tool label="Cancel" className="ml-7">
          <Art w={24} h={24}>
            <path d="M3 3 21 21M21 3 3 21" stroke="#c9c9c9" strokeWidth="4.400" />
          </Art>
        </Tool>
        <Tool label="Enter" className="ml-8">
          <Art w={30} h={24}>
            <path d="M2 13 10.500 21 27.500 2.500" stroke="#c9c9c9" strokeWidth="4.400" />
          </Art>
        </Tool>
        <Tool label="Insert function" className="ml-8 w-9 font-['Liberation_Serif',serif] text-[36px] leading-9 text-[#444] italic">fx</Tool>
        <span className="ml-2 h-[30px] w-[2px] bg-[#dedede]" />
        <input aria-label="Formula" className="h-10 flex-1 bg-transparent px-3 text-[26px] outline-none" />
        <Tool label="Expand formula bar" className="mr-2">
          <Art w={15} h={12}>
            <path d="M0.500 0.500H14.500L7.500 11.500Z" fill="#666" />
          </Art>
        </Tool>
      </div>
    </div>
  );
}

/* ---------- sheet ---------- */

const DATA: Record<number, [string, string]> = {
  5: ["Fruit", "Average fruits sold (per interval)"],
  6: ["Strawberries", "11"],
  7: ["Oranges", "27"],
  8: ["Lemons", "17"],
};

const COLUMN = "h-[106px] border-b-2 border-b-[#bababa] bg-[linear-gradient(180deg,#fdfdfd,#f5f5f5)] p-0 font-normal";
const LINE = "border-r-2 border-b-2 p-0";

function Sheet() {
  return (
    <table className="w-full table-fixed border-separate border-spacing-0 bg-white">
      <colgroup>
        <col className="w-[106px]" />
        <col className="w-[718px]" />
        <col className="w-[452px]" />
        <col className="w-[850px]" />
        <col />
      </colgroup>
      <thead className="font-['Lato','Open_Sans',sans-serif] text-[46px] leading-[70px] text-[#5c5c5c]">
        <tr>
          <th scope="col" aria-label="Select all" className="h-[106px] border-r-2 border-b-2 border-[#bababa] bg-[linear-gradient(135deg,#f5f5f5,#fdfdfd_50%,#fff)] p-0">
            <Art w={104} h={104}>
              <path d="M100 8V100H8Z" fill="#dedede" />
            </Art>
          </th>
          <th scope="col" className={`${COLUMN} border-r-2 border-r-[#e2e2e2] pr-24`}>H</th>
          <th scope="col" className={`${COLUMN} border-r-2 border-r-[#e2e2e2]`}>I</th>
          <th scope="col" className="h-[106px] border-r-2 border-b-4 border-r-[#e2e2e2] border-b-[#397b4a] bg-[#f0f0f0] p-0 font-normal text-[#2a6a3d]">J</th>
          <th scope="col" className={`${COLUMN} pl-24`}>K</th>
        </tr>
      </thead>
      <tbody className="font-['Liberation_Serif',serif] text-[53px] leading-[70px] text-black">
        {[1, 2, 3, 4, 5, 6, 7, 8, 9, 10].map((n) => {
          const row = DATA[n];
          const left = row ? "border-r-black" : "border-r-[#d2d2d2]";
          const below = row || n === 4 ? "border-b-black" : "border-b-[#d2d2d2]";
          const align = n === 5 ? "text-center" : "";
          return (
            <tr key={n} className="h-[72px]">
              <th scope="row" className={`${LINE} border-r-[#bababa] border-b-[#dcdcdc] bg-[linear-gradient(90deg,#fefefe,#f5f5f5)] font-['Lato','Open_Sans',sans-serif] text-[46px] font-normal text-[#5c5c5c]`}>{n}</th>
              <td className={`${LINE} ${left} border-b-[#d2d2d2]`} />
              <td className={`${LINE} ${left} ${below} ${align} font-bold ${n === 5 ? "" : "pl-2"}`}>{row?.[0]}</td>
              <td className={`${LINE} ${left} ${below} ${n === 5 ? "text-center font-bold" : "pr-2 text-right"} ${row ? "bg-[#ffff55]" : ""}`}>{row?.[1]}</td>
              <td className="border-b-2 border-b-[#d2d2d2] p-0" />
            </tr>
          );
        })}
      </tbody>
    </table>
  );
}

export default function App() {
  return (
    <div className="min-w-[2730px] overflow-hidden bg-white font-['Inter','Liberation_Sans',sans-serif]">
      <MenuBar />
      <TitleBar />
      <Ribbon />
      <FormulaBar />
      <main>
        <Sheet />
      </main>
    </div>
  );
}
